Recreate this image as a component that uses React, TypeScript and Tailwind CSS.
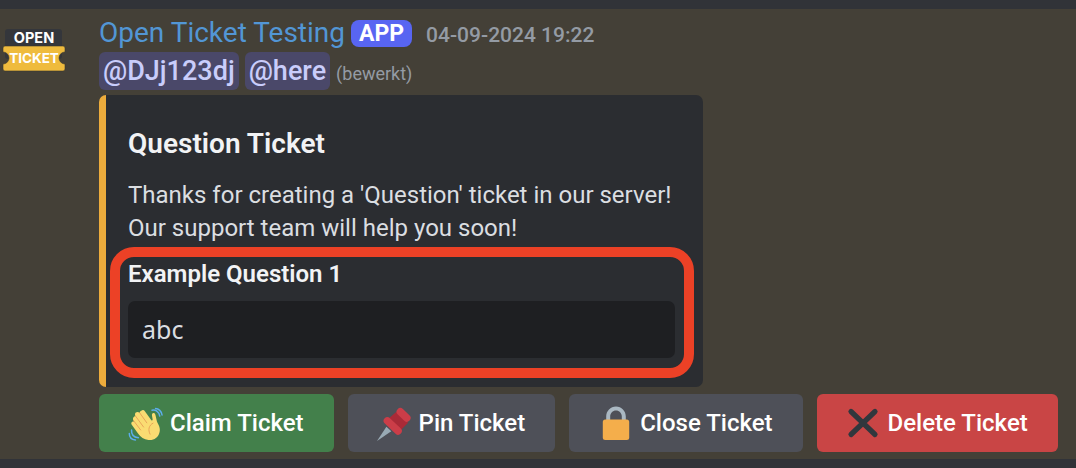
import type { ReactNode } from 'react';

function WaveIcon() {
  return (
    <svg viewBox="21 15 111 111" className="size-9 shrink-0" fill="none" strokeLinecap="round" aria-hidden="true">
      <g stroke="#5DADEC" strokeWidth="4.5">
        <path d="M106 26c9 0 19 8 20 20" />
        <path d="M95 31c12-2 22 6 24 18" />
        <path d="M25 103c0 11 7 19 19 20" />
        <path d="M32 92c-1 13 6 22 21 24" />
      </g>
      <path
        fill="#FADC72"
        d="M65 31c3-1 6 0 8 3l20 28c2 2 4 1 4-2l-2-12c-1-6 2-9 6-8 3 1 4 4 5 7l4 18c5 12 12 20 8 35-4 16-18 25-34 23-14-1-24-9-32-20L32 75c-3-5 2-11 8-8-4-7-5-10-2-14 2-3 5-3 6-3-2-5-2-9 1-12 4-3 9-2 12 2 0-4 3-8 8-9z"
      />
      <g stroke="#E59B54" strokeWidth="2.6">
        <path d="M57 39l22 31" />
        <path d="M44 49l25 34" />
        <path d="M38 63l22 29" />
        <path d="M98 71c-13 7-16 20-9 34" />
      </g>
    </svg>
  );
}

function PinIcon() {
  return (
    <svg viewBox="21 15 111 111" className="size-9 shrink-0" aria-hidden="true">
      <path fill="#99AAB5" d="M21 126l29-44 15 14z" />
      <path fill="#A92A37" d="M81 36l36 34-27 27-36-38z" />
      <path stroke="#CB3D48" strokeWidth="23" strokeLinecap="round" d="M93 36l20 19" />
      <path stroke="#CB3D48" strokeWidth="23" strokeLinecap="round" d="M53 64l33 31" />
    </svg>
  );
}

function LockIcon() {
  return (
    <svg viewBox="0 0 36 36" className="size-9 shrink-0" aria-hidden="true">
      <path
        fill="#AAB8C2"
        d="M18 1.500C12.500 1.500 8.200 6 8.200 11.500V20h4V11.500c0-3.300 2.500-6 5.800-6s5.800 2.700 5.800 6V20h4V11.500C27.800 6 23.500 1.500 18 1.500z"
      />
      <rect x="4.800" y="14.500" width="26.400" height="20.500" rx="2.500" fill="#F4AE4B" />
    </svg>
  );
}

function CrossIcon() {
  return (
    <svg viewBox="0 0 36 36" className="size-9 shrink-0" aria-hidden="true">
      <path d="M5 6.500l24 23M29 6.500L5 29.500" stroke="#31373D" strokeWidth="5.200" strokeLinecap="round" />
    </svg>
  );
}

function Logo() {
  return (
    <svg viewBox="0 0 64 44" className="w-16" role="img" aria-label="Open Ticket">
      <rect x="3" y="1" width="57" height="30" rx="3" fill="#34363B" />
      <path
        fill="#EFBB3D"
        stroke="#393730"
        strokeWidth=".6"
        d="M3 18h58q2 0 2 2v4a6 6 0 0 0 0 12v5q0 2-2 2H3q-2 0-2-2v-5a6 6 0 0 0 0-12v-4q0-2 2-2z"
      />
      <g fill="#fff" fontFamily="Inter, sans-serif" fontWeight="700" textAnchor="middle">
        <text x="32" y="15" fontSize="14.500">OPEN</text>
        <text x="32" y="35" fontSize="13.500">TICKET</text>
      </g>
    </svg>
  );
}

function Mention({ children }: { children: ReactNode }) {
  return (
    <a href="#mention" className="rounded-md bg-[#4a4869] px-1 text-[27px] leading-[38px] font-medium text-[#c9cdfb]">
      {children}
    </a>
  );
}

function TicketButton({ icon, label, tone }: { icon: ReactNode; label: string; tone: string }) {
  return (
    <button
      type="button"
      className={`flex h-[58px] items-center gap-1.5 rounded-md pr-[30px] pl-[29px] text-2xl font-medium whitespace-nowrap text-white ${tone}`}
    >
      {icon}
      {label}
    </button>
  );
}

export default function App() {
  return (
    <main className="bg-[#313338] py-[9px] font-[Roboto,sans-serif]">
      <article className="flex gap-[33px] bg-[#444037] pt-[5px] pr-4 pb-[7px] pl-0.5">
        <div className="w-16 shrink-0 pt-3.5">
          <Logo />
        </div>
        <div className="min-w-0 flex-1">
          <header className="flex items-baseline whitespace-nowrap">
            <h1 className="text-[28px] leading-[38px] text-[#5296d5]">Open Ticket Testing</h1>
            <span className="ml-1.5 self-center rounded-lg bg-[#5865f2] px-2 text-[23px] leading-[27px] font-bold text-white">
              APP
            </span>
            <time className="ml-3.5 text-[21px] leading-7 font-medium text-[#949ba4]">04-09-2024 19:22</time>
          </header>
          <p className="flex items-baseline gap-1.5">
            <Mention>@DJj123dj</Mention>
            <Mention>@here</Mention>
            <span className="text-lg text-[#949ba4]">(bewerkt)</span>
          </p>
          <section className="mt-[5px] w-full max-w-[604px] rounded-[7px] border-l-[7px] border-[#edac3c] bg-[#2b2d31] pt-[33px] pr-7 pb-[29px] pl-[22px]">
            <h2 className="text-[28px] leading-8 font-semibold text-[#f2f3f5]">Question Ticket</h2>
            <p className="mt-[19px] text-2xl leading-[33px] text-[#dbdee1]">
              Thanks for creating a 'Question' ticket in our server!
              <br />
              Our support team will help you soon!
            </p>
            <div className="relative mt-[13px]">
              <div className="pointer-events-none absolute -top-[11px] -right-[19px] -bottom-5 -left-[18px] rounded-[24px] border-10 border-[#ec4126]" />
              <h3 className="text-2xl leading-8 font-semibold text-[#f2f3f5]">Example Question 1</h3>
              <pre className="mt-[11px] rounded-[7px] bg-[#1e1f22] px-3.5 py-3 font-['Noto_Sans',sans-serif] text-[25px] leading-[33px] text-[#dbdee1]">
                abc
              </pre>
            </div>
          </section>
          <div className="mt-[7px] flex flex-wrap gap-3.5">
            <TicketButton icon={<WaveIcon />} label="Claim Ticket" tone="bg-[#43804b]" />
            <TicketButton icon={<PinIcon />} label="Pin Ticket" tone="bg-[#4e5058]" />
            <TicketButton icon={<LockIcon />} label="Close Ticket" tone="bg-[#4e5058]" />
            <TicketButton icon={<CrossIcon />} label="Delete Ticket" tone="bg-[#c94545]" />
          </div>
        </div>
      </article>
    </main>
  );
}
